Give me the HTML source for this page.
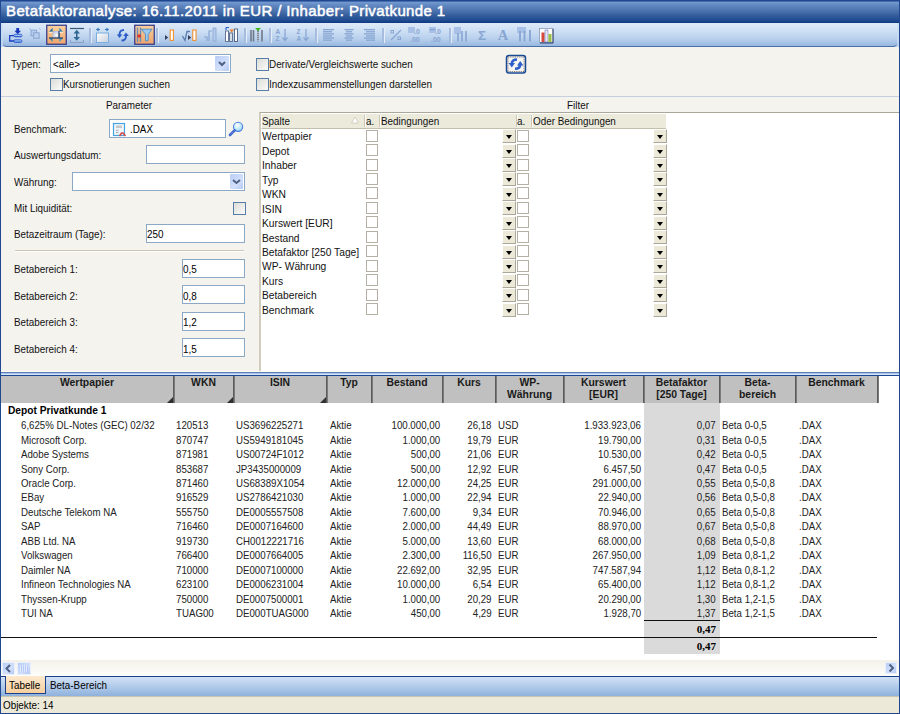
<!DOCTYPE html>
<html><head><meta charset="utf-8"><title>Betafaktoranalyse</title>
<style>
*{box-sizing:border-box;margin:0;padding:0}
html,body{width:900px;height:714px;overflow:hidden}
body{position:relative;background:#f4f3ee;font-family:"Liberation Sans",sans-serif;font-size:11px;color:#000}
.a{position:absolute}
.t{position:absolute;white-space:nowrap;line-height:1}
#title{left:0;top:0;width:900px;height:23px;background:linear-gradient(#163a86 0,#163a86 1px,#749cd2 2px,#6289c2 5px,#4c72ad 11px,#315b9a 16px,#214e91 20px,#143f88 22px,#0e3883 23px)}
#title .t{left:6px;top:3px;font-size:15px;font-weight:normal;color:#fff;letter-spacing:0.38px;-webkit-text-stroke:0.5px #fff}
#tb{left:3px;top:23px;width:894px;height:24px;border-radius:0 0 4px 4px;background:linear-gradient(#dfeaf8,#cddff4 35%,#b7cfec 70%,#98b7df);border-bottom:1px solid #4a6ea6}
.sep{position:absolute;top:28px;width:3px;height:14.5px;margin-left:-1px;background:linear-gradient(90deg,#a6bde0 0 2px,#e4edf8 2px 3px)}
.in{position:absolute;background:#fff;border:1px solid #8ba8c6}
.cb{position:absolute;width:13px;height:13px;border:1px solid #587ea8;background:linear-gradient(135deg,#dcdcd7,#fbfbfa)}
.ddb{position:absolute;background:linear-gradient(135deg,#b9cdf6,#d3e0fb 60%,#b4c8f5);border-radius:1px}
.lbl{position:absolute;white-space:nowrap;line-height:1;font-size:10.5px;color:#111;margin-left:-0.8px;margin-top:-0.7px;transform:scaleX(0.94);transform-origin:0 0}
.fg{position:absolute;left:259px;top:112px;width:640px;height:259px;background:#fff;border-top:1px solid #aca899;border-left:2px solid #d0cdc0}
.fh{position:absolute;top:113px;height:16px;background:#ebeadb;border-bottom:1px solid #c4c0b0;border-top:1px solid #fff;border-left:1px solid #fff}
.fcb{position:absolute;width:12px;height:12px;border:1px solid #b4b1a4;background:#fff}
.fdd{position:absolute;width:14px;height:14px;background:#ece9d8;border-left:1px solid #fff;border-top:1px solid #fff;border-right:1px solid #aca899;border-bottom:1px solid #aca899}
.fdd:after{content:"";position:absolute;left:3px;top:5px;border-left:3.5px solid transparent;border-right:3.5px solid transparent;border-top:4px solid #000}
.hd{position:absolute;top:376px;height:27px;background:#c0c0c0}
.hs{position:absolute;top:376px;width:2px;height:27px;background:linear-gradient(90deg,#5c5c5c 0 1px,#7a7a7a 1px 2px)}
.ht{position:absolute;top:376.5px;font-weight:bold;font-size:10.4px;line-height:12.9px;color:#1a1a1a;text-align:center;white-space:nowrap}
.grip{position:absolute;top:397px;width:0;height:0;border-left:6px solid transparent;border-bottom:6px solid #303030}
.d{position:absolute;white-space:nowrap;line-height:1;font-size:10.6px;color:#222;transform:scaleX(0.915);transform-origin:0 0}
.d.r{transform-origin:100% 0}
</style></head><body>

<div class="a" style="left:0;top:0;width:900px;height:714px;border:1px solid #1f4890;border-right-width:1px;z-index:50;pointer-events:none"></div>
<div id="title" class="a"><div class="t">Betafaktoranalyse: 16.11.2011 in EUR / Inhaber: Privatkunde 1</div></div>
<div class="a" style="left:0;top:23px;width:900px;height:24px;background:linear-gradient(#d2e2f6,#bcd2ef)"></div>
<div id="tb" class="a"></div>
<div class="a" style="left:3px;top:23px;width:894px;height:23px;border-radius:0 0 0 4px"></div>
<svg class="a" style="left:0;top:0" width="600" height="47" viewBox="0 0 600 47"><defs><linearGradient id="bb" x1="0" y1="0" x2="0" y2="1"><stop offset="0" stop-color="#5b8fe8"/><stop offset="0.5" stop-color="#9cc4f6"/><stop offset="1" stop-color="#1f4fc8"/></linearGradient><linearGradient id="og" x1="0" y1="0" x2="0" y2="1"><stop offset="0" stop-color="#fad29f"/><stop offset="0.5" stop-color="#f5ba84"/><stop offset="1" stop-color="#efa46c"/></linearGradient><linearGradient id="wg" x1="0" y1="0" x2="1" y2="1"><stop offset="0" stop-color="#ffffff"/><stop offset="1" stop-color="#c8d0dc"/></linearGradient></defs><rect x="16.3" y="28" width="2.8" height="3" fill="#1536b8"/><path d="M14.5 30.8 H21 L17.7 34.3 Z" fill="#1536b8"/><rect x="13.8" y="34.2" width="8.2" height="2.7" rx="1.3" fill="url(#bb)" stroke="#1c44c0" stroke-width="0.6"/><rect x="13.8" y="39.7" width="8.2" height="2.7" rx="1.3" fill="url(#bb)" stroke="#1c44c0" stroke-width="0.6"/><path d="M14 35.6 H9.7 V41 H14" fill="none" stroke="#1a3fc0" stroke-width="1.3"/><rect x="31" y="30.2" width="5.5" height="5.5" fill="#b9cdec" stroke="#87a5d2" stroke-width="1"/><rect x="33.6" y="32.8" width="5.5" height="5.5" fill="#b9cdec" stroke="#87a5d2" stroke-width="1"/><path d="M29.5 28.5 L30.8 29.8 M39.5 28.5 L40.3 29.5" stroke="#87a5d2" stroke-width="1"/><rect x="46.75" y="25.25" width="19.5" height="19" fill="url(#og)" stroke="#323a8a" stroke-width="1.25"/><rect x="134.75" y="25.25" width="19.5" height="19" fill="url(#og)" stroke="#323a8a" stroke-width="1.25"/><defs><radialGradient id="sq" cx="0.6" cy="0.6" r="0.7"><stop offset="0" stop-color="#ffffff"/><stop offset="1" stop-color="#a9b7cf"/></radialGradient><linearGradient id="tl" x1="0" y1="0" x2="1" y2="1"><stop offset="0" stop-color="#1f5f90"/><stop offset="1" stop-color="#4aa8d8"/></linearGradient></defs><rect x="52.5" y="31" width="7" height="7" fill="url(#sq)"/><rect x="58.3" y="31" width="1.6" height="7.4" fill="#34507a"/><path d="M49 31.8 L52.6 27.8 L52.6 31.8 Z M63 31.8 L59.4 27.8 L59.4 31.8 Z M49 38 L52.6 42 L52.6 38 Z M63 38 L59.4 42 L59.4 38 Z" fill="url(#tl)"/><path d="M49 32.3 H52.5 M59.5 32.3 H63" stroke="#fff" stroke-width="0.9" opacity="0.85"/><path d="M49 38 H63" stroke="#2b4a6e" stroke-width="1.3"/><path d="M70 28.5 H84" stroke="#3b5778" stroke-width="1.2"/><path d="M70.5 40 V42.5 H83.5 V40" fill="none" stroke="#8aa0c0" stroke-width="1"/><rect x="76" y="32" width="1.5" height="6" fill="#2e5a80"/><path d="M73.5 33.5 H80 L76.75 29.8 Z M73.5 37 H80 L76.75 40.8 Z" fill="#2e6a96"/><rect x="96.5" y="33" width="12" height="9.5" fill="url(#wg)" stroke="#7aaee0" stroke-width="1"/><path d="M96 29.5 L98.5 27.5 L98.5 31.5 Z M109 29.5 L106.5 27.5 L106.5 31.5 Z" fill="#2f78c0"/><path d="M98 29.5 H100 M105 29.5 H107" stroke="#2f78c0" stroke-width="1"/><path d="M124 30 C120 30 119.5 32 119.5 35" fill="none" stroke="#2d5ec8" stroke-width="2"/><path d="M116.8 34.5 L122.3 34.5 L119.5 38 Z" fill="#2d5ec8"/><path d="M121.5 40.5 C125.5 40.5 126 38.5 126 35.5" fill="none" stroke="#2d5ec8" stroke-width="2"/><path d="M123.2 36 L128.8 36 L126 32.5 Z" fill="#2d5ec8"/><path d="M137.5 27.5 V42 M140.5 27.5 V42" stroke="#6b8bbb" stroke-width="1.4"/><rect x="137.5" y="34.5" width="3.2" height="3" fill="#e8301c"/><path d="M141.5 29.2 H152 L148.2 34.5 V40.5 L145.5 41 V34.5 Z" fill="#9ccaee" stroke="#4d8fca" stroke-width="0.9"/><path d="M165 35 L168.2 37.5 L165 40 Z" fill="#333c58"/><rect x="170.2" y="30" width="3.2" height="10.4" fill="#fff" stroke="#f0902c" stroke-width="1.1"/><path d="M182.5 36 L185 40.5 L187 31.5 H190" fill="none" stroke="#5b7cae" stroke-width="1.3"/><path d="M188 35 L191.2 37.5 L188 40 Z" fill="#333c58"/><rect x="192.8" y="30" width="3.2" height="10.4" fill="#fff" stroke="#f0902c" stroke-width="1.1"/><path d="M204 37 H207 V41 M209 41 V31 H212" fill="none" stroke="#87a5d2" stroke-width="1.2"/><rect x="213" y="28" width="3" height="13" fill="#b5cbeb" stroke="#87a5d2" stroke-width="0.8"/><rect x="225.5" y="31" width="3" height="10.5" fill="#fff" stroke="#5a6d8a" stroke-width="0.9"/><rect x="229.5" y="33" width="3" height="8.5" fill="#d8dee8" stroke="#5a6d8a" stroke-width="0.9"/><rect x="234.5" y="29" width="3" height="12.5" fill="#fff" stroke="#4e5f80" stroke-width="0.9"/><path d="M226 27.5 V30 M226 27.5 H229" stroke="#2d5ec8" stroke-width="1.2"/><path d="M229.5 29.5 H234 L231.75 32.5 Z" fill="#ee7a22"/><path d="M251 30 V41.5 M253.5 30 V41.5 M258 30 V41.5 M262 30 V41.5" stroke="#6e7888" stroke-width="1.6"/><path d="M255 28 H261 L258 31 Z" fill="#3cb818"/><path d="M258 32 V41" stroke="#fff" stroke-width="0.8" stroke-dasharray="1 1"/><text x="275.5" y="33.5" font-family="Liberation Sans" font-size="6.5" font-weight="bold" fill="#87a5d2">A</text><text x="275.5" y="41" font-family="Liberation Sans" font-size="6.5" font-weight="bold" fill="#87a5d2">Z</text><path d="M285 29 V40 M282.5 37.5 L285 40.5 L287.5 37.5" fill="none" stroke="#87a5d2" stroke-width="1.2"/><text x="296.5" y="33.5" font-family="Liberation Sans" font-size="6.5" font-weight="bold" fill="#87a5d2">Z</text><text x="296.5" y="41" font-family="Liberation Sans" font-size="6.5" font-weight="bold" fill="#87a5d2">A</text><path d="M306 29 V40 M303.5 37.5 L306 40.5 L308.5 37.5" fill="none" stroke="#87a5d2" stroke-width="1.2"/><rect x="323" y="29.0" width="11" height="1.3" fill="#87a5d2"/><rect x="344.5" y="29.0" width="9" height="1.3" fill="#87a5d2"/><rect x="364.0" y="29.0" width="11" height="1.3" fill="#87a5d2"/><rect x="323" y="31.1" width="9" height="1.3" fill="#87a5d2"/><rect x="346.0" y="31.1" width="6" height="1.3" fill="#87a5d2"/><rect x="366.0" y="31.1" width="9" height="1.3" fill="#87a5d2"/><rect x="323" y="33.2" width="11" height="1.3" fill="#87a5d2"/><rect x="344.5" y="33.2" width="9" height="1.3" fill="#87a5d2"/><rect x="364.0" y="33.2" width="11" height="1.3" fill="#87a5d2"/><rect x="323" y="35.3" width="9" height="1.3" fill="#87a5d2"/><rect x="346.0" y="35.3" width="6" height="1.3" fill="#87a5d2"/><rect x="366.0" y="35.3" width="9" height="1.3" fill="#87a5d2"/><rect x="323" y="37.4" width="11" height="1.3" fill="#87a5d2"/><rect x="344.5" y="37.4" width="9" height="1.3" fill="#87a5d2"/><rect x="364.0" y="37.4" width="11" height="1.3" fill="#87a5d2"/><rect x="323" y="39.5" width="9" height="1.3" fill="#87a5d2"/><rect x="346.0" y="39.5" width="6" height="1.3" fill="#87a5d2"/><rect x="366.0" y="39.5" width="9" height="1.3" fill="#87a5d2"/><path d="M391 40 L401 30" stroke="#87a5d2" stroke-width="1.1"/><rect x="391" y="30.5" width="2.5" height="2.5" fill="none" stroke="#87a5d2"/><rect x="398" y="37" width="2.5" height="2.5" fill="none" stroke="#87a5d2"/><rect x="408" y="27" width="7" height="6" fill="#a9c1e6"/><text x="414" y="34" font-family="Liberation Sans" font-size="7" font-weight="bold" fill="#87a5d2">.0</text><text x="410" y="41.5" font-family="Liberation Sans" font-size="7" font-weight="bold" fill="#87a5d2">.00</text><rect x="429" y="27" width="7" height="6" fill="#a9c1e6"/><rect x="430" y="29" width="5" height="1.3" fill="#87a5d2"/><text x="435" y="34" font-family="Liberation Sans" font-size="7" font-weight="bold" fill="#87a5d2">.0</text><text x="431" y="41.5" font-family="Liberation Sans" font-size="7" font-weight="bold" fill="#87a5d2">.00</text><rect x="454" y="27" width="7" height="7" fill="#a9c1e6"/><path d="M458 33 V41.5 M462 31 V41.5 M466 31 V41.5" stroke="#87a5d2" stroke-width="1.6"/><text x="478" y="40" font-family="Liberation Sans" font-size="13.5" font-weight="bold" fill="#87a5d2" opacity="0.95">&#931;</text><text x="497.8" y="40" font-family="Liberation Serif" font-size="14.5" font-weight="bold" fill="#87a5d2">A</text><rect x="517" y="27" width="9" height="6" fill="#a9c1e6"/><path d="M520 31 V41.5 M524.5 31 V41.5 M530 30 V41.5" stroke="#87a5d2" stroke-width="1.8"/><rect x="539.5" y="28.5" width="13.5" height="14" fill="#fff" stroke="#8b9bb5" stroke-width="0.8"/><path d="M553 29 V43 H540" fill="none" stroke="#2a3a6a" stroke-width="1"/><rect x="541.5" y="32.5" width="3" height="9.5" fill="#d8483c"/><rect x="545" y="30" width="3" height="12" fill="#e8eaf6" stroke="#4a5ab8" stroke-width="0.5"/><rect x="548.5" y="34" width="3" height="8" fill="#9cc040"/></svg>
<div class="sep" style="left:90px"></div>
<div class="sep" style="left:157px"></div>
<div class="sep" style="left:245px"></div>
<div class="sep" style="left:270px"></div>
<div class="sep" style="left:316px"></div>
<div class="sep" style="left:383px"></div>
<div class="sep" style="left:450px"></div>
<div class="lbl" style="left:12px;top:60px">Typen:</div>
<div class="in" style="left:50px;top:54px;width:181px;height:19px"></div>
<div class="lbl" style="left:54px;top:60px;color:#000">&lt;alle&gt;</div>
<div class="ddb" style="left:215px;top:56px;width:14px;height:15px"></div>
<svg class="a" style="left:216px;top:58px" width="12" height="11"><path d="M3 4 L6 7 L9 4" stroke="#4d6185" stroke-width="2" fill="none"/></svg>
<div class="cb" style="left:50px;top:78px"></div>
<div class="lbl" style="left:64px;top:80px">Kursnotierungen suchen</div>
<div class="cb" style="left:256px;top:58px"></div>
<div class="lbl" style="left:270px;top:60px">Derivate/Vergleichswerte suchen</div>
<div class="cb" style="left:256px;top:78px"></div>
<div class="lbl" style="left:270px;top:80px">Indexzusammenstellungen darstellen</div>
<svg class="a" style="left:504px;top:53px" width="24" height="22" viewBox="504 53 24 22"><rect x="506.5" y="55.5" width="19" height="17.5" rx="2.5" fill="#f6f6f2" stroke="#1a4a94" stroke-width="1.5"/><rect x="508" y="57" width="16" height="14.5" fill="none" stroke="#5a4a4a" stroke-width="0.8" stroke-dasharray="0.9 0.9"/><path d="M517 59.5 C513 59.5 511.8 61.5 511.8 64" fill="none" stroke="#2d60cc" stroke-width="2.6"/><path d="M508.6 63 L515 63 L511.8 67.5 Z" fill="#2d60cc"/><path d="M515 68.8 C519 68.8 520.2 66.8 520.2 64.5" fill="none" stroke="#2d60cc" stroke-width="2.6"/><path d="M517 65.5 L523.4 65.5 L520.2 61 Z" fill="#2d60cc"/></svg>
<div class="a" style="left:1px;top:96px;width:898px;height:1px;background:#c6cfdd"></div>
<div class="lbl" style="left:107px;top:101px">Parameter</div>
<div class="lbl" style="left:568px;top:101px">Filter</div>
<div class="lbl" style="left:15px;top:125px">Benchmark:</div>
<div class="in" style="left:109px;top:119px;width:117px;height:19px"></div>
<div class="lbl" style="left:131px;top:125px;color:#000">.DAX</div>
<svg class="a" style="left:108px;top:117px" width="140" height="24" viewBox="108 117 140 24"><defs><radialGradient id="mg" cx="0.4" cy="0.35" r="0.7"><stop offset="0" stop-color="#ffffff"/><stop offset="0.5" stop-color="#c8ecfb"/><stop offset="1" stop-color="#8ccaf0"/></radialGradient></defs><rect x="113.5" y="123.5" width="11" height="12" fill="#eef6fc" stroke="#48a4de" stroke-width="1.2"/><rect x="116" y="125.5" width="6" height="2.5" fill="#c8c8c8"/><path d="M116 130.3 H118.5 M116 132.6 H118.5" stroke="#909090" stroke-width="0.8"/><path d="M119.5 136 L121.5 133 L123 133 L125.5 136" fill="none" stroke="#d84a4a" stroke-width="1.6"/><circle cx="238.1" cy="126.8" r="4.6" fill="url(#mg)" stroke="#4a7ee0" stroke-width="1.1"/><path d="M234.6 130.3 L230 135" stroke="#3a64cc" stroke-width="2.6" stroke-linecap="round"/><path d="M234.3 130.6 L229.8 135.1" stroke="#9cc0f0" stroke-width="0.7" stroke-dasharray="1 1"/></svg>
<div class="lbl" style="left:15px;top:151px">Auswertungsdatum:</div>
<div class="in" style="left:146px;top:145px;width:99px;height:19px"></div>
<div class="lbl" style="left:15px;top:178px">Währung:</div>
<div class="in" style="left:72px;top:172px;width:173px;height:19px"></div>
<div class="ddb" style="left:230px;top:174px;width:13px;height:15px"></div>
<svg class="a" style="left:230px;top:176px" width="13" height="11"><path d="M3 4 L6.5 7 L10 4" stroke="#4d6185" stroke-width="2" fill="none"/></svg>
<div class="lbl" style="left:15px;top:204px">Mit Liquidität:</div>
<div class="cb" style="left:233px;top:202px"></div>
<div class="lbl" style="left:15px;top:230px">Betazeitraum (Tage):</div>
<div class="in" style="left:146px;top:224px;width:99px;height:19px"></div>
<div class="lbl" style="left:148px;top:230px;color:#000">250</div>
<div class="a" style="left:15px;top:250px;width:229px;height:2px;background:linear-gradient(#c9c6b6 0 1px,#fff 1px 2px)"></div>
<div class="lbl" style="left:15px;top:265.0px">Betabereich 1:</div>
<div class="in" style="left:182px;top:259.0px;width:63px;height:19px"></div>
<div class="lbl" style="left:184px;top:265.0px;color:#000">0,5</div>
<div class="lbl" style="left:15px;top:291.4px">Betabereich 2:</div>
<div class="in" style="left:182px;top:285.4px;width:63px;height:19px"></div>
<div class="lbl" style="left:184px;top:291.4px;color:#000">0,8</div>
<div class="lbl" style="left:15px;top:317.8px">Betabereich 3:</div>
<div class="in" style="left:182px;top:311.8px;width:63px;height:19px"></div>
<div class="lbl" style="left:184px;top:317.8px;color:#000">1,2</div>
<div class="lbl" style="left:15px;top:344.2px">Betabereich 4:</div>
<div class="in" style="left:182px;top:338.2px;width:63px;height:19px"></div>
<div class="lbl" style="left:184px;top:344.2px;color:#000">1,5</div>
<div class="fg"></div>
<div class="fh" style="left:261px;width:405px"></div>
<div class="a" style="left:364px;top:115px;width:2px;height:12px;background:linear-gradient(90deg,#cbc7b8 0 1px,#fff 1px 2px)"></div>
<div class="a" style="left:379px;top:115px;width:2px;height:12px;background:linear-gradient(90deg,#cbc7b8 0 1px,#fff 1px 2px)"></div>
<div class="a" style="left:516px;top:115px;width:2px;height:12px;background:linear-gradient(90deg,#cbc7b8 0 1px,#fff 1px 2px)"></div>
<div class="a" style="left:531px;top:115px;width:2px;height:12px;background:linear-gradient(90deg,#cbc7b8 0 1px,#fff 1px 2px)"></div>
<div class="lbl" style="left:263px;top:117px">Spalte</div>
<svg class="a" style="left:351px;top:116px" width="8" height="8"><path d="M0.5 7 L4 1 L7.5 7 Z" fill="#fff" stroke="#cbc7b8" stroke-width="0.8"/></svg>
<div class="lbl" style="left:367px;top:117px">a.</div>
<div class="lbl" style="left:382px;top:117px">Bedingungen</div>
<div class="lbl" style="left:518px;top:117px">a.</div>
<div class="lbl" style="left:534px;top:117px">Oder Bedingungen</div>
<div class="lbl" style="left:263px;top:131.8px;transform:scaleX(0.975)">Wertpapier</div>
<div class="fcb" style="left:366px;top:129.5px"></div>
<div class="fdd" style="left:502px;top:129.0px"></div>
<div class="fcb" style="left:517px;top:129.5px"></div>
<div class="fdd" style="left:653px;top:129.0px"></div>
<div class="lbl" style="left:263px;top:146.3px;transform:scaleX(0.975)">Depot</div>
<div class="fcb" style="left:366px;top:144.0px"></div>
<div class="fdd" style="left:502px;top:143.5px"></div>
<div class="fcb" style="left:517px;top:144.0px"></div>
<div class="fdd" style="left:653px;top:143.5px"></div>
<div class="lbl" style="left:263px;top:160.8px;transform:scaleX(0.975)">Inhaber</div>
<div class="fcb" style="left:366px;top:158.5px"></div>
<div class="fdd" style="left:502px;top:158.0px"></div>
<div class="fcb" style="left:517px;top:158.5px"></div>
<div class="fdd" style="left:653px;top:158.0px"></div>
<div class="lbl" style="left:263px;top:175.2px;transform:scaleX(0.975)">Typ</div>
<div class="fcb" style="left:366px;top:172.9px"></div>
<div class="fdd" style="left:502px;top:172.4px"></div>
<div class="fcb" style="left:517px;top:172.9px"></div>
<div class="fdd" style="left:653px;top:172.4px"></div>
<div class="lbl" style="left:263px;top:189.7px;transform:scaleX(0.975)">WKN</div>
<div class="fcb" style="left:366px;top:187.4px"></div>
<div class="fdd" style="left:502px;top:186.9px"></div>
<div class="fcb" style="left:517px;top:187.4px"></div>
<div class="fdd" style="left:653px;top:186.9px"></div>
<div class="lbl" style="left:263px;top:204.2px;transform:scaleX(0.975)">ISIN</div>
<div class="fcb" style="left:366px;top:201.9px"></div>
<div class="fdd" style="left:502px;top:201.4px"></div>
<div class="fcb" style="left:517px;top:201.9px"></div>
<div class="fdd" style="left:653px;top:201.4px"></div>
<div class="lbl" style="left:263px;top:218.7px;transform:scaleX(0.975)">Kurswert [EUR]</div>
<div class="fcb" style="left:366px;top:216.4px"></div>
<div class="fdd" style="left:502px;top:215.9px"></div>
<div class="fcb" style="left:517px;top:216.4px"></div>
<div class="fdd" style="left:653px;top:215.9px"></div>
<div class="lbl" style="left:263px;top:233.2px;transform:scaleX(0.975)">Bestand</div>
<div class="fcb" style="left:366px;top:230.9px"></div>
<div class="fdd" style="left:502px;top:230.4px"></div>
<div class="fcb" style="left:517px;top:230.9px"></div>
<div class="fdd" style="left:653px;top:230.4px"></div>
<div class="lbl" style="left:263px;top:247.6px;transform:scaleX(0.975)">Betafaktor [250 Tage]</div>
<div class="fcb" style="left:366px;top:245.3px"></div>
<div class="fdd" style="left:502px;top:244.8px"></div>
<div class="fcb" style="left:517px;top:245.3px"></div>
<div class="fdd" style="left:653px;top:244.8px"></div>
<div class="lbl" style="left:263px;top:262.1px;transform:scaleX(0.975)">WP- Währung</div>
<div class="fcb" style="left:366px;top:259.8px"></div>
<div class="fdd" style="left:502px;top:259.3px"></div>
<div class="fcb" style="left:517px;top:259.8px"></div>
<div class="fdd" style="left:653px;top:259.3px"></div>
<div class="lbl" style="left:263px;top:276.6px;transform:scaleX(0.975)">Kurs</div>
<div class="fcb" style="left:366px;top:274.3px"></div>
<div class="fdd" style="left:502px;top:273.8px"></div>
<div class="fcb" style="left:517px;top:274.3px"></div>
<div class="fdd" style="left:653px;top:273.8px"></div>
<div class="lbl" style="left:263px;top:291.1px;transform:scaleX(0.975)">Betabereich</div>
<div class="fcb" style="left:366px;top:288.8px"></div>
<div class="fdd" style="left:502px;top:288.3px"></div>
<div class="fcb" style="left:517px;top:288.8px"></div>
<div class="fdd" style="left:653px;top:288.3px"></div>
<div class="lbl" style="left:263px;top:305.6px;transform:scaleX(0.975)">Benchmark</div>
<div class="fcb" style="left:366px;top:303.3px"></div>
<div class="fdd" style="left:502px;top:302.8px"></div>
<div class="fcb" style="left:517px;top:303.3px"></div>
<div class="fdd" style="left:653px;top:302.8px"></div>
<div class="a" style="left:0;top:371px;width:900px;height:5px;background:linear-gradient(#fffbf0 0 1px,#5b7db5 1px 2px,#a9c4ea 2px 3px,#d2e4f8 3px 4px,#1d4792 4px 5px)"></div>
<div class="a" style="left:1px;top:376px;width:898px;height:27px;background:#fff"></div>
<div class="hd" style="left:1px;width:877px"></div>
<div class="hs" style="left:173px"></div>
<div class="hs" style="left:233px"></div>
<div class="hs" style="left:326px"></div>
<div class="hs" style="left:371px"></div>
<div class="hs" style="left:442px"></div>
<div class="hs" style="left:495px"></div>
<div class="hs" style="left:563px"></div>
<div class="hs" style="left:643px"></div>
<div class="hs" style="left:719px"></div>
<div class="hs" style="left:795px"></div>
<div class="hs" style="left:877px"></div>
<div class="ht" style="left:1px;width:172px">Wertpapier</div>
<div class="ht" style="left:174px;width:59px">WKN</div>
<div class="ht" style="left:234px;width:92px">ISIN</div>
<div class="ht" style="left:327px;width:44px">Typ</div>
<div class="ht" style="left:372px;width:70px">Bestand</div>
<div class="ht" style="left:443px;width:52px">Kurs</div>
<div class="ht" style="left:496px;width:67px">WP-<br>Währung</div>
<div class="ht" style="left:564px;width:79px">Kurswert<br>[EUR]</div>
<div class="ht" style="left:644px;width:75px">Betafaktor<br>[250 Tage]</div>
<div class="ht" style="left:720px;width:75px">Beta-<br>bereich</div>
<div class="ht" style="left:796px;width:81px">Benchmark</div>
<div class="grip" style="left:167px"></div>
<div class="grip" style="left:227px"></div>
<div class="grip" style="left:320px"></div>
<div class="a" style="left:1px;top:403px;width:898px;height:257px;background:#fff"></div>
<div class="a" style="left:644px;top:403px;width:76px;height:251px;background:#dadada"></div>
<div class="d" style="left:8px;top:406px;font-weight:bold;font-size:10.2px;color:#000;transform:none">Depot Privatkunde 1</div>
<div class="d" style="left:21px;top:420.2px">6,625% DL-Notes (GEC) 02/32</div>
<div class="d" style="left:176px;top:420.2px">120513</div>
<div class="d" style="left:236px;top:420.2px">US3696225271</div>
<div class="d" style="left:330px;top:420.2px">Aktie</div>
<div class="d r" style="right:460px;top:420.2px">100.000,00</div>
<div class="d r" style="right:408px;top:420.2px">26,18</div>
<div class="d" style="left:498px;top:420.2px">USD</div>
<div class="d r" style="right:259px;top:420.2px">1.933.923,06</div>
<div class="d r" style="right:184px;top:420.2px">0,07</div>
<div class="d" style="left:722px;top:420.2px">Beta 0-0,5</div>
<div class="d" style="left:799px;top:420.2px">.DAX</div>
<div class="d" style="left:21px;top:434.6px">Microsoft Corp.</div>
<div class="d" style="left:176px;top:434.6px">870747</div>
<div class="d" style="left:236px;top:434.6px">US5949181045</div>
<div class="d" style="left:330px;top:434.6px">Aktie</div>
<div class="d r" style="right:460px;top:434.6px">1.000,00</div>
<div class="d r" style="right:408px;top:434.6px">19,79</div>
<div class="d" style="left:498px;top:434.6px">EUR</div>
<div class="d r" style="right:259px;top:434.6px">19.790,00</div>
<div class="d r" style="right:184px;top:434.6px">0,31</div>
<div class="d" style="left:722px;top:434.6px">Beta 0-0,5</div>
<div class="d" style="left:799px;top:434.6px">.DAX</div>
<div class="d" style="left:21px;top:449.1px">Adobe Systems</div>
<div class="d" style="left:176px;top:449.1px">871981</div>
<div class="d" style="left:236px;top:449.1px">US00724F1012</div>
<div class="d" style="left:330px;top:449.1px">Aktie</div>
<div class="d r" style="right:460px;top:449.1px">500,00</div>
<div class="d r" style="right:408px;top:449.1px">21,06</div>
<div class="d" style="left:498px;top:449.1px">EUR</div>
<div class="d r" style="right:259px;top:449.1px">10.530,00</div>
<div class="d r" style="right:184px;top:449.1px">0,42</div>
<div class="d" style="left:722px;top:449.1px">Beta 0-0,5</div>
<div class="d" style="left:799px;top:449.1px">.DAX</div>
<div class="d" style="left:21px;top:463.5px">Sony Corp.</div>
<div class="d" style="left:176px;top:463.5px">853687</div>
<div class="d" style="left:236px;top:463.5px">JP3435000009</div>
<div class="d" style="left:330px;top:463.5px">Aktie</div>
<div class="d r" style="right:460px;top:463.5px">500,00</div>
<div class="d r" style="right:408px;top:463.5px">12,92</div>
<div class="d" style="left:498px;top:463.5px">EUR</div>
<div class="d r" style="right:259px;top:463.5px">6.457,50</div>
<div class="d r" style="right:184px;top:463.5px">0,47</div>
<div class="d" style="left:722px;top:463.5px">Beta 0-0,5</div>
<div class="d" style="left:799px;top:463.5px">.DAX</div>
<div class="d" style="left:21px;top:478.0px">Oracle Corp.</div>
<div class="d" style="left:176px;top:478.0px">871460</div>
<div class="d" style="left:236px;top:478.0px">US68389X1054</div>
<div class="d" style="left:330px;top:478.0px">Aktie</div>
<div class="d r" style="right:460px;top:478.0px">12.000,00</div>
<div class="d r" style="right:408px;top:478.0px">24,25</div>
<div class="d" style="left:498px;top:478.0px">EUR</div>
<div class="d r" style="right:259px;top:478.0px">291.000,00</div>
<div class="d r" style="right:184px;top:478.0px">0,55</div>
<div class="d" style="left:722px;top:478.0px">Beta 0,5-0,8</div>
<div class="d" style="left:799px;top:478.0px">.DAX</div>
<div class="d" style="left:21px;top:492.4px">EBay</div>
<div class="d" style="left:176px;top:492.4px">916529</div>
<div class="d" style="left:236px;top:492.4px">US2786421030</div>
<div class="d" style="left:330px;top:492.4px">Aktie</div>
<div class="d r" style="right:460px;top:492.4px">1.000,00</div>
<div class="d r" style="right:408px;top:492.4px">22,94</div>
<div class="d" style="left:498px;top:492.4px">EUR</div>
<div class="d r" style="right:259px;top:492.4px">22.940,00</div>
<div class="d r" style="right:184px;top:492.4px">0,56</div>
<div class="d" style="left:722px;top:492.4px">Beta 0,5-0,8</div>
<div class="d" style="left:799px;top:492.4px">.DAX</div>
<div class="d" style="left:21px;top:506.9px">Deutsche Telekom NA</div>
<div class="d" style="left:176px;top:506.9px">555750</div>
<div class="d" style="left:236px;top:506.9px">DE0005557508</div>
<div class="d" style="left:330px;top:506.9px">Aktie</div>
<div class="d r" style="right:460px;top:506.9px">7.600,00</div>
<div class="d r" style="right:408px;top:506.9px">9,34</div>
<div class="d" style="left:498px;top:506.9px">EUR</div>
<div class="d r" style="right:259px;top:506.9px">70.946,00</div>
<div class="d r" style="right:184px;top:506.9px">0,65</div>
<div class="d" style="left:722px;top:506.9px">Beta 0,5-0,8</div>
<div class="d" style="left:799px;top:506.9px">.DAX</div>
<div class="d" style="left:21px;top:521.4px">SAP</div>
<div class="d" style="left:176px;top:521.4px">716460</div>
<div class="d" style="left:236px;top:521.4px">DE0007164600</div>
<div class="d" style="left:330px;top:521.4px">Aktie</div>
<div class="d r" style="right:460px;top:521.4px">2.000,00</div>
<div class="d r" style="right:408px;top:521.4px">44,49</div>
<div class="d" style="left:498px;top:521.4px">EUR</div>
<div class="d r" style="right:259px;top:521.4px">88.970,00</div>
<div class="d r" style="right:184px;top:521.4px">0,67</div>
<div class="d" style="left:722px;top:521.4px">Beta 0,5-0,8</div>
<div class="d" style="left:799px;top:521.4px">.DAX</div>
<div class="d" style="left:21px;top:535.8px">ABB Ltd. NA</div>
<div class="d" style="left:176px;top:535.8px">919730</div>
<div class="d" style="left:236px;top:535.8px">CH0012221716</div>
<div class="d" style="left:330px;top:535.8px">Aktie</div>
<div class="d r" style="right:460px;top:535.8px">5.000,00</div>
<div class="d r" style="right:408px;top:535.8px">13,60</div>
<div class="d" style="left:498px;top:535.8px">EUR</div>
<div class="d r" style="right:259px;top:535.8px">68.000,00</div>
<div class="d r" style="right:184px;top:535.8px">0,68</div>
<div class="d" style="left:722px;top:535.8px">Beta 0,5-0,8</div>
<div class="d" style="left:799px;top:535.8px">.DAX</div>
<div class="d" style="left:21px;top:550.2px">Volkswagen</div>
<div class="d" style="left:176px;top:550.2px">766400</div>
<div class="d" style="left:236px;top:550.2px">DE0007664005</div>
<div class="d" style="left:330px;top:550.2px">Aktie</div>
<div class="d r" style="right:460px;top:550.2px">2.300,00</div>
<div class="d r" style="right:408px;top:550.2px">116,50</div>
<div class="d" style="left:498px;top:550.2px">EUR</div>
<div class="d r" style="right:259px;top:550.2px">267.950,00</div>
<div class="d r" style="right:184px;top:550.2px">1,09</div>
<div class="d" style="left:722px;top:550.2px">Beta 0,8-1,2</div>
<div class="d" style="left:799px;top:550.2px">.DAX</div>
<div class="d" style="left:21px;top:564.7px">Daimler NA</div>
<div class="d" style="left:176px;top:564.7px">710000</div>
<div class="d" style="left:236px;top:564.7px">DE0007100000</div>
<div class="d" style="left:330px;top:564.7px">Aktie</div>
<div class="d r" style="right:460px;top:564.7px">22.692,00</div>
<div class="d r" style="right:408px;top:564.7px">32,95</div>
<div class="d" style="left:498px;top:564.7px">EUR</div>
<div class="d r" style="right:259px;top:564.7px">747.587,94</div>
<div class="d r" style="right:184px;top:564.7px">1,12</div>
<div class="d" style="left:722px;top:564.7px">Beta 0,8-1,2</div>
<div class="d" style="left:799px;top:564.7px">.DAX</div>
<div class="d" style="left:21px;top:579.1px">Infineon Technologies NA</div>
<div class="d" style="left:176px;top:579.1px">623100</div>
<div class="d" style="left:236px;top:579.1px">DE0006231004</div>
<div class="d" style="left:330px;top:579.1px">Aktie</div>
<div class="d r" style="right:460px;top:579.1px">10.000,00</div>
<div class="d r" style="right:408px;top:579.1px">6,54</div>
<div class="d" style="left:498px;top:579.1px">EUR</div>
<div class="d r" style="right:259px;top:579.1px">65.400,00</div>
<div class="d r" style="right:184px;top:579.1px">1,12</div>
<div class="d" style="left:722px;top:579.1px">Beta 0,8-1,2</div>
<div class="d" style="left:799px;top:579.1px">.DAX</div>
<div class="d" style="left:21px;top:593.6px">Thyssen-Krupp</div>
<div class="d" style="left:176px;top:593.6px">750000</div>
<div class="d" style="left:236px;top:593.6px">DE0007500001</div>
<div class="d" style="left:330px;top:593.6px">Aktie</div>
<div class="d r" style="right:460px;top:593.6px">1.000,00</div>
<div class="d r" style="right:408px;top:593.6px">20,29</div>
<div class="d" style="left:498px;top:593.6px">EUR</div>
<div class="d r" style="right:259px;top:593.6px">20.290,00</div>
<div class="d r" style="right:184px;top:593.6px">1,30</div>
<div class="d" style="left:722px;top:593.6px">Beta 1,2-1,5</div>
<div class="d" style="left:799px;top:593.6px">.DAX</div>
<div class="d" style="left:21px;top:608.0px">TUI NA</div>
<div class="d" style="left:176px;top:608.0px">TUAG00</div>
<div class="d" style="left:236px;top:608.0px">DE000TUAG000</div>
<div class="d" style="left:330px;top:608.0px">Aktie</div>
<div class="d r" style="right:460px;top:608.0px">450,00</div>
<div class="d r" style="right:408px;top:608.0px">4,29</div>
<div class="d" style="left:498px;top:608.0px">EUR</div>
<div class="d r" style="right:259px;top:608.0px">1.928,70</div>
<div class="d r" style="right:184px;top:608.0px">1,37</div>
<div class="d" style="left:722px;top:608.0px">Beta 1,2-1,5</div>
<div class="d" style="left:799px;top:608.0px">.DAX</div>
<div class="a" style="left:644px;top:620px;width:76px;height:1px;background:#111"></div>
<div class="a" style="left:1px;top:637px;width:876px;height:1px;background:#111"></div>
<div class="t" style="right:184px;top:624px;font-family:'Liberation Serif',serif;font-weight:bold;font-size:11px">0,47</div>
<div class="t" style="right:184px;top:641px;font-family:'Liberation Serif',serif;font-weight:bold;font-size:11px">0,47</div>
<div class="a" style="left:1px;top:660px;width:898px;height:16px;background:linear-gradient(#f3f1e9,#fdfdfb)"></div>
<div class="ddb" style="left:2px;top:662px;width:13px;height:13px;border:1px solid #e8effc"></div>
<div class="ddb" style="left:17px;top:662px;width:14px;height:13px;border:1px solid #e8effc"></div>
<svg class="a" style="left:17px;top:662px" width="14" height="13"><path d="M3.5 3 V10 M5.5 3 V10 M7.5 3 V10 M9.5 3 V10" stroke="#eef3fd" stroke-width="0.9"/><path d="M4.3 3.5 V10.5 M6.3 3.5 V10.5 M8.3 3.5 V10.5 M10.3 3.5 V10.5" stroke="#a9c2f2" stroke-width="0.8"/></svg>
<div class="ddb" style="left:885px;top:662px;width:12px;height:12px;border:1px solid #e8effc"></div>
<svg class="a" style="left:2px;top:662px" width="13" height="13"><path d="M8 3 L4.5 6.5 L8 10" stroke="#4d6185" stroke-width="2" fill="none"/></svg>
<svg class="a" style="left:885px;top:662px" width="12" height="12"><path d="M4.5 2.5 L8 6 L4.5 9.5" stroke="#4d6185" stroke-width="2" fill="none"/></svg>
<div class="a" style="left:0;top:676px;width:900px;height:20px;border-top:1px solid #1b3f8b;background:linear-gradient(#d2e2f5,#b2cbea 50%,#8eb1dc)"></div>
<div class="a" style="left:5px;top:676px;width:41px;height:18px;border:1px solid #1b3f8b;border-top:none;background:linear-gradient(#fde9cf,#f6cf9e)"></div>
<div class="lbl" style="left:10px;top:681px;color:#000">Tabelle</div>
<div class="lbl" style="left:51px;top:681px;color:#000">Beta-Bereich</div>
<div class="a" style="left:0;top:696px;width:900px;height:18px;background:#ece9d8;border-top:1px solid #c8c4b0"></div>
<div class="lbl" style="left:3.5px;top:701px;color:#000">Objekte: 14</div>
</body></html>
